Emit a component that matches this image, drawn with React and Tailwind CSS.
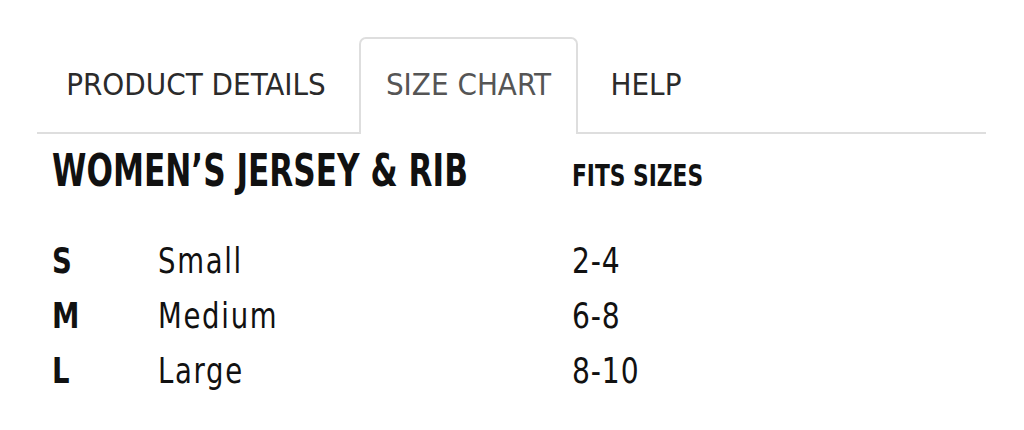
import React from 'react';

const sizes = [
  { code: 'S', name: 'Small', fits: '2-4' },
  { code: 'M', name: 'Medium', fits: '6-8' },
  { code: 'L', name: 'Large', fits: '8-10' },
];

const cond = "font-['DejaVu_Sans_Condensed','DejaVu_Sans',sans-serif]";

export default function App() {
  return (
    <div className={`w-[1024px] h-[430px] bg-white pt-[37px] ${cond}`}>
      {/* Tabs */}
      <div className="ml-[37px] w-[949px] h-[97px] flex items-end border-b-2 border-[#dedede]">
        <div className="w-[318px] h-[95px] flex items-center justify-center text-[31px] text-[#2b2b2b]">
          PRODUCT DETAILS
        </div>
        <div className="ml-[4px] w-[219px] h-[97px] -mb-[2px] pb-[4px] flex items-center justify-center rounded-t-[7px] border-2 border-b-0 border-[#dedede] bg-white text-[31px] text-[#555]">
          SIZE CHART
        </div>
        <div className="w-[136px] h-[95px] flex items-center justify-center text-[31px] text-[#2b2b2b]">
          HELP
        </div>
      </div>

      {/* Size table */}
      <div className="ml-[52px] mt-[14px] grid grid-cols-[520px_1fr] items-baseline text-[#111]">
        <div>
          <h2 className="inline-block whitespace-nowrap origin-left scale-x-[0.77] text-[45px] font-bold leading-none">
            WOMEN’S JERSEY &amp; RIB
          </h2>
        </div>
        <div>
          <span className="inline-block whitespace-nowrap origin-left scale-x-[0.78] text-[31px] font-bold leading-none">
            FITS SIZES
          </span>
        </div>
      </div>

      <div className="ml-[52px] mt-[50px] flex flex-col gap-[19px]">
        {sizes.map(s => (
          <div key={s.code} className="grid grid-cols-[106px_414px_1fr] items-baseline text-[36px] leading-none text-[#111]">
            <span className="font-bold inline-block origin-left scale-x-[0.85]">{s.code}</span>
            <span className="inline-block origin-left scale-x-[0.85] tracking-[2px]">{s.name}</span>
            <span className="inline-block origin-left scale-x-[0.87] tracking-[1px]">{s.fits}</span>
          </div>
        ))}
      </div>
    </div>
  );
}
